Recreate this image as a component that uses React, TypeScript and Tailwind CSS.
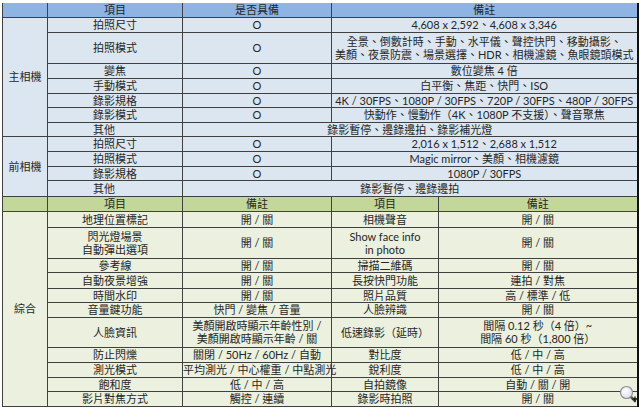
import React from "react";

type Cell = {
  text: React.ReactNode;
  colSpan?: number;
  className?: string;
};

type Row = {
  h: string;
  cells: Cell[];
};

const line = "border border-[#404040]";
const cellBase =
  "p-0 text-center align-middle whitespace-nowrap leading-[13px] overflow-visible";

const topRows: Row[] = [
  { h: "h-[15px]", cells: [{ text: "拍照尺寸" }, { text: "O" }, { text: "4,608 x 2,592、4,608 x 3,346", colSpan: 2 }] },
  {
    h: "h-[31px]",
    cells: [
      { text: "拍照模式" },
      { text: "O" },
      {
        text: (
          <>
            全景、倒數計時、手動、水平儀、聲控快門、移動攝影、
            <br />
            美顏、夜景防震、場景選擇、HDR、相機濾鏡、魚眼鏡頭模式
          </>
        ),
        colSpan: 2,
      },
    ],
  },
  { h: "h-[15px]", cells: [{ text: "變焦" }, { text: "O" }, { text: "數位變焦 4 倍", colSpan: 2 }] },
  { h: "h-[15px]", cells: [{ text: "手動模式" }, { text: "O" }, { text: "白平衡、焦距、快門、ISO", colSpan: 2 }] },
  {
    h: "h-[14px]",
    cells: [{ text: "錄影規格" }, { text: "O" }, { text: "4K / 30FPS、1080P / 30FPS、720P / 30FPS、480P / 30FPS", colSpan: 2 }],
  },
  {
    h: "h-[15px]",
    cells: [{ text: "錄影模式" }, { text: "O" }, { text: "快動作、慢動作（4K、1080P 不支援）、聲音聚焦", colSpan: 2 }],
  },
  {
    h: "h-[14px]",
    cells: [{ text: "其他", className: "pr-[22px]" }, { text: "錄影暫停、邊錄邊拍、錄影補光燈", colSpan: 3 }],
  },
];

const frontRows: Row[] = [
  { h: "h-[15px]", cells: [{ text: "拍照尺寸" }, { text: "O" }, { text: "2,016 x 1,512、2,688 x 1,512", colSpan: 2 }] },
  { h: "h-[15px]", cells: [{ text: "拍照模式" }, { text: "O" }, { text: "Magic mirror、美顏、相機濾鏡", colSpan: 2 }] },
  { h: "h-[14px]", cells: [{ text: "錄影規格" }, { text: "O" }, { text: "1080P / 30FPS", colSpan: 2 }] },
  { h: "h-[16px]", cells: [{ text: "其他", className: "pr-[22px]" }, { text: "錄影暫停、邊錄邊拍", colSpan: 3 }] },
];

const generalRows: Row[] = [
  { h: "h-[16px]", cells: [{ text: "地理位置標記" }, { text: "開 / 關" }, { text: "相機聲音" }, { text: "開 / 關" }] },
  {
    h: "h-[31px]",
    cells: [
      { text: <>閃光燈場景<br />自動彈出選項</> },
      { text: "開 / 關" },
      { text: <>Show face info<br />in photo</> },
      { text: "開 / 關" },
    ],
  },
  { h: "h-[14px]", cells: [{ text: "參考線" }, { text: "開 / 關" }, { text: "掃描二維碼" }, { text: "開 / 關" }] },
  { h: "h-[16px]", cells: [{ text: "自動夜景增強" }, { text: "開 / 關" }, { text: "長按快門功能" }, { text: "連拍 / 對焦" }] },
  { h: "h-[14px]", cells: [{ text: "時間水印" }, { text: "開 / 關" }, { text: "照片品質" }, { text: "高 / 標準 / 低" }] },
  { h: "h-[15px]", cells: [{ text: "音量鍵功能" }, { text: "快門 / 變焦 / 音量" }, { text: "人臉辨識" }, { text: "開 / 關" }] },
  {
    h: "h-[30px]",
    cells: [
      { text: "人臉資訊" },
      { text: <>美顏開啟時顯示年齡性別 /<br />美顏開啟時顯示年齡 / 關</> },
      { text: "低速錄影（延時）" },
      { text: <>間隔 0.12 秒（4 倍）~<br />間隔 60 秒（1,800 倍）</> },
    ],
  },
  { h: "h-[15px]", cells: [{ text: "防止閃爍" }, { text: "關閉 / 50Hz / 60Hz / 自動" }, { text: "對比度" }, { text: "低 / 中 / 高" }] },
  { h: "h-[15px]", cells: [{ text: "測光模式" }, { text: "平均測光 / 中心權重 / 中點測光" }, { text: "銳利度" }, { text: "低 / 中 / 高" }] },
  { h: "h-[14px]", cells: [{ text: "飽和度" }, { text: "低 / 中 / 高" }, { text: "自拍鏡像" }, { text: "自動 / 關 / 開" }] },
  { h: "h-[15px]", cells: [{ text: "影片對焦方式" }, { text: "觸控 / 連續" }, { text: "錄影時拍照" }, { text: "開 / 關" }] },
];

const Section = ({
  label,
  rows,
  bg,
}: {
  label: string;
  rows: Row[];
  bg: string;
}) => (
  <>
    {rows.map((row, i) => (
      <tr key={i} className={row.h}>
        {i === 0 && (
          <td rowSpan={rows.length} className={`${cellBase} ${line} ${bg}`}>
            {label}
          </td>
        )}
        {row.cells.map((c, j) => (
          <td key={j} colSpan={c.colSpan} className={`${cellBase} ${line} ${bg} ${c.className ?? ""}`}>
            {c.text}
          </td>
        ))}
      </tr>
    ))}
  </>
);

const Magnifier = () => (
  <svg className="absolute left-[619px] top-[385px]" width="20" height="20" viewBox="0 0 20 20">
    <defs>
      <radialGradient id="lens" cx="0.4" cy="0.35" r="0.7">
        <stop offset="0" stopColor="#ffffff" />
        <stop offset="1" stopColor="#d9dde3" />
      </radialGradient>
    </defs>
    <line x1="11.5" y1="11.5" x2="16" y2="16" stroke="#5a5a5a" strokeWidth="2.6" strokeLinecap="round" />
    <circle cx="7.5" cy="7.5" r="6" fill="url(#lens)" stroke="#8a8f96" strokeWidth="1.2" />
    <path d="M16 11.5v5M13.5 14h5" stroke="#111" strokeWidth="1.3" />
  </svg>
);

export default function App() {
  return (
    <div
      className="relative w-[640px] h-[409px] overflow-hidden bg-white pt-[3px] pl-[2px] text-[11px] text-[#262626]"
      style={{ fontFamily: 'Lato, "Noto Sans CJK TC", sans-serif' }}
    >
      <table className="table-fixed border-collapse w-[635px] border-l border-r-2 border-b border-l-black border-r-[#111] border-b-black">
        <colgroup>
          <col className="w-[45px]" />
          <col className="w-[135px]" />
          <col className="w-[149px]" />
          <col className="w-[107px]" />
          <col className="w-[199px]" />
        </colgroup>
        <tbody>
          <tr className="h-[14px]">
            <td className={`${cellBase} ${line} border-t-0 bg-[#8db4e2]`} />
            <td className={`${cellBase} ${line} border-t-0 bg-[#8db4e2]`}>項目</td>
            <td className={`${cellBase} ${line} border-t-0 bg-[#8db4e2]`}>是否具備</td>
            <td colSpan={2} className={`${cellBase} ${line} border-t-0 bg-[#8db4e2]`}>
              備註
            </td>
          </tr>
          <Section label="主相機" rows={topRows} bg="bg-[#dce6f1]" />
          <Section label="前相機" rows={frontRows} bg="bg-[#dce6f1]" />
          <tr className="h-[15px]">
            <td className={`${cellBase} ${line} bg-[#c4d79b]`} />
            <td className={`${cellBase} ${line} bg-[#c4d79b]`}>項目</td>
            <td className={`${cellBase} ${line} bg-[#c4d79b]`}>備註</td>
            <td className={`${cellBase} ${line} bg-[#c4d79b]`}>項目</td>
            <td className={`${cellBase} ${line} bg-[#c4d79b]`}>備註</td>
          </tr>
          <Section label="綜合" rows={generalRows} bg="bg-[#ebf1de]" />
        </tbody>
      </table>
      <Magnifier />
    </div>
  );
}
